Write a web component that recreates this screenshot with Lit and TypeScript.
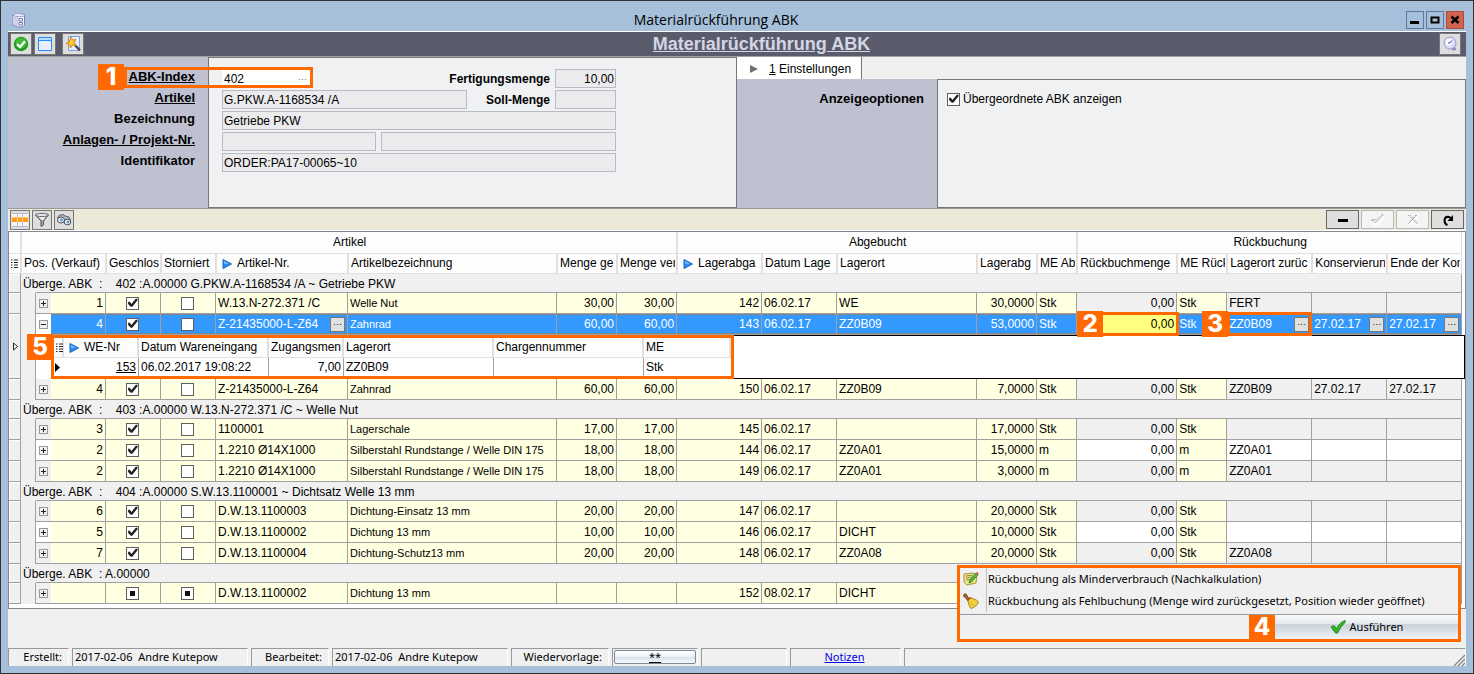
import { LitElement, html, css, svg, nothing } from "lit";
import { customElement, property } from "lit/decorators.js";
import { classMap } from "lit/directives/class-map.js";

interface Position {
  pos: string;
  state: "on" | "mixed";
  nr: string;
  name: string;
  total: string;
  used: string;
  issue: string;
  date: string;
  place: string;
  qty: string;
  unit: string;
  back: string;
  backPlace: string;
  keep: string;
  light?: boolean;
  selected?: boolean;
}

interface Group {
  title: string;
  rows: Position[];
}

const row = (v: string, extra: Partial<Position> = {}): Position => {
  const [pos, nr, name, total, used, issue, date, place, qty, unit, backPlace, keep] = v.split("|");
  return { pos, nr, name, total, used, issue, date, place, qty, unit, backPlace, keep, back: "0,00", state: "on", ...extra };
};

const GROUPS: Group[] = [
  {
    title: "Überge. ABK  :    402 :A.00000 G.PKW.A-1168534 /A ~ Getriebe PKW",
    rows: [
      row("1|W.13.N-272.371 /C|Welle Nut|30,00|30,00|142|06.02.17|WE|30,0000|Stk|FERT|"),
      row("4|Z-21435000-L-Z64|Zahnrad|60,00|60,00|143|06.02.17|ZZ0B09|53,0000|Stk|ZZ0B09|27.02.17", { selected: true, light: true }),
      row("4|Z-21435000-L-Z64|Zahnrad|60,00|60,00|150|06.02.17|ZZ0B09|7,0000|Stk|ZZ0B09|27.02.17"),
    ],
  },
  {
    title: "Überge. ABK  :    403 :A.00000 W.13.N-272.371 /C ~ Welle Nut",
    rows: [
      row("3|1100001|Lagerschale|17,00|17,00|145|06.02.17||17,0000|Stk||"),
      row("2|1.2210 Ø14X1000|Silberstahl Rundstange / Welle DIN 175|18,00|18,00|144|06.02.17|ZZ0A01|15,0000|m|ZZ0A01|", { light: true }),
      row("2|1.2210 Ø14X1000|Silberstahl Rundstange / Welle DIN 175|18,00|18,00|149|06.02.17|ZZ0A01|3,0000|m|ZZ0A01|"),
    ],
  },
  {
    title: "Überge. ABK  :    404 :A.00000 S.W.13.1100001 ~ Dichtsatz Welle 13 mm",
    rows: [
      row("6|D.W.13.1100003|Dichtung-Einsatz 13 mm|20,00|20,00|147|06.02.17||20,0000|Stk||"),
      row("5|D.W.13.1100002|Dichtung 13 mm|10,00|10,00|146|06.02.17|DICHT|10,0000|Stk||", { light: true }),
      row("7|D.W.13.1100004|Dichtung-Schutz13 mm|20,00|20,00|148|06.02.17|ZZ0A08|20,0000|Stk|ZZ0A08|"),
    ],
  },
  {
    title: "Überge. ABK  : A.00000",
    rows: [row("|D.W.13.1100002|Dichtung 13 mm|||152|08.02.17|DICHT||||", { state: "mixed", back: "" })],
  },
];

const COLUMNS = [12, 15, 15, 55, 55, 55, 132, 209, 60, 60, 85, 75, 140, 60, 40, 100, 50, 85, 75, 75];
const HEADERS: { text: string; sort?: boolean }[] = [
  { text: "Geschlos" },
  { text: "Storniert" },
  { text: "Artikel-Nr.", sort: true },
  { text: "Artikelbezeichnung" },
  { text: "Menge ge" },
  { text: "Menge ver" },
  { text: "Lagerabga", sort: true },
  { text: "Datum Lage" },
  { text: "Lagerort" },
  { text: "Lagerabg" },
  { text: "ME Ab" },
  { text: "Rückbuchmenge" },
  { text: "ME Rück" },
  { text: "Lagerort zurüc" },
  { text: "Konservierun" },
  { text: "Ende der Kon" },
];

const icon = (w: number, h: number, body: unknown) =>
  html`<svg width=${w} height=${h} viewBox="0 0 ${w} ${h}" aria-hidden="true">${body}</svg>`;

const icons = {
  app: icon(15, 16, svg`<path d="M1 3 5 1l8 1 1 2v9l-3 2.500H7L1 13z" fill="#7c7eb4"/><path d="M1.500 3.500l5 1.500v9.500l-5-2z" fill="#cfd0ec"/><path d="M6.500 5l6.500-.500v9L10.500 14.500h-4z" fill="#f4f5ff"/><path d="M2 3 5 1.500l7.500 1L13 4l-6.500.500z" fill="#e6e7f8"/><path d="M8 6.500h3.500v2.500H8zM8 10.500h3.500v2.500H8z" fill="#fff" stroke="#7779b4"/>`),
  min: icon(10, 10, svg`<path d="M0 6h9v3H0z"/>`),
  max: icon(10, 10, svg`<path d="M1.500 2.500h7v5h-7z" fill="none" stroke="#000" stroke-width="2"/>`),
  close: icon(10, 10, svg`<path d="M1.500 1.500l7 6.500M8.500 1.500l-7 6.500" stroke="#000" stroke-width="2.400"/>`),
  ok: icon(16, 16, svg`<circle cx="8" cy="8" r="7.200" fill="#1c9a1c"/><circle cx="8" cy="7" r="5.500" fill="#3dbb35"/><path d="M4 8.200 7 11l5-5.800" fill="none" stroke="#fff" stroke-width="2.400"/>`),
  window: icon(16, 16, svg`<path d="M1.500 1.500h13v13h-13z" fill="#eceeff" stroke="#1e90ff"/><path d="M1 4.500h14" stroke="#1e90ff"/><path d="M2 2h12v2H2z" fill="#b8dcff"/>`),
  wizard: icon(16, 16, svg`<path d="M3.500.500h11v14h-11z" fill="#e8efff" stroke="#7d9fe0"/><path d="M8 7l7 7.500" stroke="#4a4550" stroke-width="2.400"/><path d="M6 1l1.500 3 3.500-.500L9 6.500l2 3-3.500-.500L5.500 12l-1-3.500L1 7.500 4 6z" fill="#ffc83c" stroke="#d88a10"/>`),
  clock: icon(16, 16, svg`<circle cx="8" cy="7" r="6" fill="#dcdcf8" stroke="#9a9ad0"/><circle cx="7" cy="6" r="3.600" fill="#f8f8ff"/><path d="M8 7l2-2.500M8 7H6" stroke="#4848a0"/><path d="M11 11.500c1 .500 2 .200 2.500-.500l.5 3-4 .800z" fill="#8a8ac8"/>`),
  table: icon(16, 16, svg`<path d="M0 1h16v14H0z" fill="#f4f4fa"/><path d="M0 5h16v5H0z" fill="#ff9b1e"/><path d="M0 5h16v1H0z" fill="#ffbe50"/><path d="M5.500 1v14M10.500 1v14M0 1.500h16M0 14.500h16" stroke="#b9b9cc"/><path d="M5.500 5v5M10.500 5v5" stroke="#ffd890"/>`),
  filter: icon(16, 16, svg`<path d="M1.500 3 7 9v5.500l2.500-1.500V9l5-6z" fill="#a8abb2" stroke="#555"/><path d="M3.500 4h9L9 8H8z" fill="#f4f4f4"/><ellipse cx="8" cy="3" rx="6.500" ry="1.600" fill="#e8e8ea" stroke="#666"/>`),
  find: icon(16, 16, svg`<path d="M1.500 6 3 3.500l4-1L9 4l4 1 1.500 3-6 1z" fill="#b4bac4" stroke="#5c6270"/><ellipse cx="5" cy="8" rx="3.500" ry="3" fill="#eef2f6" stroke="#4a4f5c"/><ellipse cx="11.500" cy="10" rx="3.300" ry="2.800" fill="#eef2f6" stroke="#4a4f5c"/><circle cx="5.500" cy="8" r="1.400" fill="#5a93c4"/><circle cx="12" cy="10" r="1.400" fill="#5a93c4"/>`),
  minus: icon(12, 12, svg`<path d="M1 5h10v3H1z"/>`),
  check: icon(14, 12, svg`<path d="M2 8.500l3 2.500 8.500-8.500" fill="none" stroke="#fff" stroke-width="2"/><path d="M.500 6.500h2l2 2.500L12.500 1M1 6l3-1 1 1.500L10.500 1h2" fill="none" stroke="#a8a8a8" stroke-dasharray="2 1"/>`),
  cross: icon(14, 12, svg`<path d="M3 2l9 9M12 2l-9 9" stroke="#fff" stroke-width="2"/><path d="M2 1l9 9M11 1l-9 9M4 1l8 9M10 1 2 10" stroke="#a8a8a8" stroke-dasharray="2 1" fill="none"/>`),
  redo: icon(12, 12, svg`<path d="M5.500 11C1.500 9.500 1.500 3 5.800 2.800c1.800 0 2.400.700 3 1.700" fill="none" stroke="#000" stroke-width="2"/><path d="M11 1v6H5.500z"/>`),
  sort: icon(10, 10, svg`<path d="M1 .500 9.500 5 1 9.500z" fill="#2a8cf0" stroke="#1566c8"/><path d="M2 2l5 2.700H2z" fill="#7cc0ff"/>`),
  tabArrow: icon(8, 8, svg`<path d="M0 0l8 4-8 4z" fill="#707070"/>`),
  list: icon(8, 10, svg`<path d="M0 1h1.500M0 3.500h1.500M0 6h1.500M0 8.500h1.500M3 1h4M3 3.500h4M3 6h4M3 8.500h4" stroke="#222"/>`),
  current: icon(5, 9, svg`<path d="M.500 1v7l4-3.500z" fill="#fff" stroke="#222"/>`),
  currentSolid: icon(5, 9, svg`<path d="M0 0v9l5-4.500z"/>`),
  note: icon(16, 16, svg`<path d="M1 3l9-1 4 2-1 8-9 2-3-3z" fill="#f3e58a" stroke="#a89430"/><path d="M3 5l7-1M3 7l6-1M3 9l4-.500" stroke="#9a8a40"/><path d="M6 12l1-3 6-7 2 1.500-6 7z" fill="#52c043" stroke="#278a20"/><path d="M12.500 2.500 14 1l1.500 1.200L15 3.800z" fill="#e04838"/>`),
  broom: icon(16, 16, svg`<path d="M1 1.500C2 0 4 1 4 3l3 3-2 2-2.500-3.500C1 4 0 3 1 1.500z" fill="#a5682a" stroke="#70420f"/><path d="M5 7l2.500-2.500C10 6 13 6 15.500 9c-1 3-4 5.500-7.500 6.500C6 13 5 10 5 7z" fill="#f2d040" stroke="#a58410"/><path d="M7.500 9l3 4" stroke="#c8a828"/><path d="M4.500 7.500 8 4.500" stroke="#d03a20" stroke-width="1.400"/>`),
  go: icon(16, 14, svg`<path d="M1 7l3-1.500L6.500 9C8.500 5 11 2 15 .500l.5 1.500C12 5 9.500 9 7.500 13H5.500z" fill="#3cb52c" stroke="#1e8a18"/>`),
};

@customElement("step-badge")
export class StepBadge extends LitElement {
  @property() number = "";

  static styles = css`
    :host {
      display: block;
      width: 26px;
      height: 26px;
      background: #ff6900;
      color: #fff;
      font: 800 24px/26px Inter, "Liberation Sans", Arial, sans-serif;
      text-align: center;
    }
  `;

  render() {
    return html`${this.number}`;
  }
}

@customElement("app-root")
export class AppRoot extends LitElement {
  static styles = css`
    :host {
      display: flex;
      flex-direction: column;
      box-sizing: border-box;
      min-height: 100vh;
      padding: 0 7px 7px;
      border: 1px solid #333;
      background: #a6c0dc;
      color: #000;
      font: 12px/20px "Liberation Sans", Arial, sans-serif;
    }
    * {
      box-sizing: border-box;
    }
    svg {
      display: block;
      flex: none;
    }
    button,
    input {
      margin: 0;
      padding: 0;
      border-radius: 0;
      color: inherit;
      font: inherit;
    }
    button {
      display: flex;
      align-items: center;
      justify-content: center;
      border: 0;
      background: none;
    }
    .titlebar {
      display: flex;
      align-items: center;
      gap: 2px;
      height: 30px;
      padding: 7px 2px 0 3px;
    }
    .titlebar h1 {
      flex: 1;
      margin: 0;
      font: 14px/20px "Open Sans", "Noto Sans", sans-serif;
      text-align: center;
    }
    .winbtn {
      width: 18px;
      height: 18px;
      border: 1px solid #61789a;
    }
    .winbtn.close {
      border-color: #b04a3c;
      background: #cf6450;
    }
    .content {
      display: flex;
      flex: 1;
      flex-direction: column;
      border-top: 1px solid #fff;
      background: #f0f0f0;
    }
    .toolbar {
      display: flex;
      align-items: center;
      gap: 2px;
      height: 25px;
      padding: 0 5px 0 2px;
      border-bottom: 1px solid #a0a0a0;
      background: #5a5c6c;
    }
    .toolbar h2 {
      flex: 1;
      margin: 0;
      color: #d4d6e4;
      font-size: 18px;
      text-align: center;
      text-decoration: underline;
    }
    .tool {
      width: 22px;
      height: 22px;
      border: 1px solid #777;
      background: #dedede;
    }
    .tool.apart {
      margin-left: 4px;
    }
    .form {
      display: flex;
      min-height: 151px;
    }
    .half {
      position: relative;
      display: flex;
      flex: 1;
    }
    .labels {
      display: flex;
      flex: none;
      flex-direction: column;
      align-items: flex-end;
      gap: 2px;
      width: 200px;
      padding: 10px 13px 0 0;
      background: #bfc0d0;
      font-weight: bold;
      font-size: 13px;
      line-height: 19px;
    }
    .labels .link {
      text-decoration: underline;
    }
    .fields {
      display: flex;
      flex: 1;
      flex-direction: column;
      gap: 2px;
      padding: 11px 13px 0;
      border: 1px solid #777;
      background: #f0f1f3;
    }
    .line {
      display: flex;
      align-items: center;
      justify-content: space-between;
      gap: 5px;
      width: 394px;
      max-width: 100%;
      height: 19px;
    }
    .line label {
      flex: 1;
      font-weight: bold;
      text-align: right;
    }
    .field {
      flex: none;
      width: 61px;
      height: 19px;
      padding: 0 1px;
      border: 1px solid #b8bbc2;
      background: #ebebed;
    }
    .field.right {
      text-align: right;
    }
    .field.full {
      width: 100%;
    }
    .field.article {
      width: 245px;
    }
    .field.plant {
      width: 154px;
    }
    .field.project {
      flex: 1;
    }
    .index {
      display: flex;
      width: 88px;
      height: 19px;
      padding-right: 3px;
      background: #fff;
    }
    .index input {
      flex: 1;
      min-width: 0;
      padding: 0 2px;
      border: 0;
      background: none;
    }
    .index button {
      color: #666;
      font-size: 9px;
    }
    .frame {
      position: absolute;
      border: 3px solid #ff6900;
      pointer-events: none;
      z-index: 2;
    }
    .badge {
      position: absolute;
      z-index: 3;
    }
    .half > .frame {
      top: 10px;
      left: 116px;
      width: 189px;
      height: 21px;
    }
    .half > .badge {
      top: 7px;
      left: 90px;
    }
    .tabs {
      flex-direction: column;
    }
    .tab {
      align-self: flex-start;
      gap: 11px;
      height: 22px;
      padding: 2px 10px 0 13px;
      border-right: 1px solid #777;
      background: #fff;
    }
    .panel {
      display: flex;
      flex: 1;
    }
    .option {
      display: flex;
      align-items: center;
      gap: 3px;
      margin: -2px 0 0 -4px;
    }
    .check {
      display: block;
      flex: none;
      width: 13px;
      height: 13px;
      border: 1px solid #606060;
      background: #fff;
      appearance: none;
    }
    .check:checked::before {
      content: "";
      display: block;
      width: 11px;
      height: 11px;
      background: #222;
      clip-path: polygon(10% 38%, 26% 38%, 40% 58%, 80% 12%, 96% 12%, 96% 26%, 48% 84%, 34% 84%, 10% 58%);
    }
    .check:indeterminate::before {
      content: "";
      display: block;
      width: 5px;
      height: 5px;
      margin: 3px;
      background: #111;
    }
    .gridbar {
      display: flex;
      align-items: center;
      gap: 2px;
      height: 23px;
      padding: 0 2px;
      border-top: 1px solid #999;
      border-bottom: 1px solid #fff;
      background: #ece9d8;
    }
    .gridbar .tool {
      width: 20px;
      height: 20px;
    }
    .nav {
      width: 33px;
      height: 19px;
      border: 1px solid #666;
      background: #dedede;
    }
    .nav:disabled {
      border-color: #b8b8b8;
      background: #f4f4f4;
    }
    .push {
      margin-left: auto;
    }
    .work {
      position: relative;
      flex: 1;
      padding-bottom: 39px;
    }
    .grid {
      padding-bottom: 4px;
      border: 1px solid #85878f;
      background: #fff;
    }
    table {
      width: 100%;
      border-spacing: 0;
      table-layout: fixed;
    }
    th,
    td {
      padding: 0;
      white-space: nowrap;
    }
    th {
      height: 20px;
      padding: 0 1px 0 2px;
      border: 1px solid #e0e0e0;
      border-top: 0;
      background: #fdfdfd;
      font-weight: normal;
      line-height: 19px;
      text-align: left;
    }
    th.band {
      height: 22px;
      line-height: 21px;
      text-align: center;
    }
    th.stub {
      padding: 0 0 0 2px;
      border-left: 0;
    }
    th.rest {
      border: 0;
      background: #fff;
    }
    .head {
      display: flex;
      align-items: center;
      gap: 5px;
      overflow: hidden;
    }
    .head.sortable {
      padding-left: 3px;
    }
    td {
      position: relative;
      height: 21px;
      padding: 0 2px 0 1px;
      border: 0 solid #a0a0a0;
      border-width: 0 1px 1px 0;
      background: #ffffe1;
      line-height: 20px;
    }
    td.num {
      text-align: right;
    }
    td.small {
      font-size: 11px;
    }
    td.text {
      padding-left: 2px;
    }
    td.edit {
      background: #f0f0f0;
    }
    .light td.edit,
    .light td.tree {
      background: #fff;
    }
    td.gutter {
      padding: 0 0 0 4px;
      background: #f0f0f0;
      box-shadow: inset 1px 1px #fff;
    }
    td.indent {
      border-bottom: 0;
      background: #f0f0f0;
    }
    .last td.indent {
      border-bottom-width: 1px;
    }
    td.tree {
      padding: 0 0 0 3px;
      border-right: 0;
      background: #f0f0f0;
    }
    td.rest {
      border: 0;
      background: #fff;
    }
    td.title {
      height: 19px;
      padding-left: 2px;
      border-bottom: 0;
      background: linear-gradient(#a0a0a0, #a0a0a0) 15px 100% / 100% 1px no-repeat #f0f0f0;
      line-height: 18px;
      white-space: pre;
    }
    td.group-gutter {
      height: 19px;
    }
    .expand {
      width: 9px;
      height: 9px;
      border: 1px solid #999;
      background: #f0f0f0;
    }
    .centered {
      display: flex;
      justify-content: center;
    }
    .selected td.cell {
      background:
        repeating-linear-gradient(90deg, #c8701e 0 1px, #3399ff 1px 2px) 0 0 / 100% 1px no-repeat,
        repeating-linear-gradient(90deg, #c8701e 0 1px, #3399ff 1px 2px) 0 100% / 100% 1px no-repeat,
        #3399ff;
      color: #fff;
    }
    .selected td.target {
      background: #ffff80;
      color: #000;
    }
    .selected td.tree,
    .detail td.tree {
      border-bottom: 0;
    }
    .withbtn {
      display: flex;
      align-items: center;
      justify-content: space-between;
    }
    .lookup {
      width: 15px;
      height: 15px;
      border: 1px solid #777;
      background: #e0e0e0;
      color: #000;
      font-size: 9px;
      line-height: 9px;
    }
    .target .frame {
      inset: -2px -3px -2px 0;
    }
    .target .badge {
      top: -3px;
      left: 0;
    }
    .place .frame {
      inset: -2px -1px -2px 0;
    }
    .place .badge {
      top: -3px;
      left: -25px;
    }
    td.nest {
      height: 44px;
      padding: 0;
      border: 0;
      background: #fff;
      box-shadow: inset 0 0 0 1px #000;
    }
    .nest .badge {
      top: -1px;
      left: -24px;
    }
    .entries {
      width: 683px;
      height: 44px;
      border: 3px solid #ff6900;
      background: #fff;
    }
    .entries th {
      border-left: 0;
      border-right-width: 2px;
    }
    .entries td {
      height: 18px;
      border-bottom: 0;
      background: #fff;
      line-height: 18px;
    }
    .entries td:last-child,
    .entries td:first-child {
      border-right: 0;
    }
    .actions {
      position: absolute;
      right: 5px;
      bottom: 6px;
      width: 504px;
      border: 3px solid #ff6900;
      background: #f0f0f0;
      font-family: "Noto Sans", "Open Sans", sans-serif;
      font-size: 11px;
      z-index: 4;
    }
    .menu {
      padding-bottom: 2px;
      border-bottom: 1px solid #999;
    }
    .menu button {
      justify-content: flex-start;
      width: 100%;
      height: 22px;
      white-space: nowrap;
    }
    .menu .glyph {
      display: flex;
      align-items: center;
      width: 27px;
      height: 22px;
      margin-right: 1px;
      padding-left: 3px;
      border-right: 1px solid #c0c0c0;
    }
    .run {
      display: flex;
      justify-content: flex-end;
      height: 24px;
    }
    .run step-badge {
      height: 24px;
      line-height: 24px;
    }
    .run button {
      gap: 4px;
      width: 183px;
      background: linear-gradient(#fafbfc, #e6eaee 35%, #c9d2da 40%, #f0f4f8);
    }
    .status {
      display: flex;
      gap: 3px;
      height: 18px;
      font: 11px/16px "Noto Sans", "Open Sans", sans-serif;
    }
    .status > * {
      flex: none;
      padding: 0 4px 0 2px;
      border: 1px solid #999;
      border-right-color: #fff;
      border-bottom: 0;
      white-space: pre;
    }
    .status .right {
      text-align: right;
      padding-right: 6px;
    }
    .status .w1 {
      width: 61px;
    }
    .status .w2 {
      width: 176px;
    }
    .status .w3 {
      width: 78px;
    }
    .status .w4 {
      width: 98px;
    }
    .status .w5 {
      width: 86px;
      padding: 1px;
    }
    .status .w6 {
      width: 111px;
      text-align: center;
    }
    .status .fill {
      display: flex;
      flex: 1;
      align-items: flex-end;
      justify-content: flex-end;
      padding: 0;
      white-space: normal;
    }
    .status a {
      color: #0000ee;
    }
    .remind {
      width: 100%;
      height: 14px;
      border: 1px solid #7a8a9c;
      border-radius: 2px;
      background: linear-gradient(#fff, #f0f4f8 45%, #d8e0e8 50%, #f4f8fc);
      text-decoration: underline;
    }
  `;

  private box(state: string, label: string) {
    return html`<div class="centered">
      <input class="check" type="checkbox" aria-label=${label} .checked=${state === "on"} .indeterminate=${state === "mixed"} />
    </div>`;
  }

  private lookup(text: string, active?: boolean) {
    return active
      ? html`<div class="withbtn"><span>${text}</span><button class="lookup" aria-label="Auswahl">···</button></div>`
      : text;
  }

  private head(text: string, sort = false) {
    return html`<th>
      <div class=${classMap({ head: true, sortable: sort })}>${sort ? icons.sort : nothing}<span>${text}</span></div>
    </th>`;
  }

  private position(p: Position, last: boolean) {
    const s = p.selected;
    return html`<tr class=${classMap({ light: !!p.light, selected: !!s, last })}>
        <td class="gutter" rowspan=${s ? 2 : 1}>${s ? html`<div>${icons.current}</div>` : nothing}</td>
        <td class="indent"></td>
        <td class="tree">
          <button class="expand" aria-label=${s ? "Zuklappen" : "Aufklappen"}>
            ${icon(7, 7, svg`<path d=${s ? "M1 3.500h5" : "M1 3.500h5M3.500 1v5"} stroke="#222"/>`)}
          </button>
        </td>
        <td class="cell num">${p.pos}</td>
        <td class="cell">${this.box(p.state, "Geschlossen")}</td>
        <td class="cell">${this.box(p.state === "mixed" ? "mixed" : "off", "Storniert")}</td>
        <td class="cell text">${this.lookup(p.nr, s)}</td>
        <td class="cell text small">${p.name}</td>
        <td class="cell num">${p.total}</td>
        <td class="cell num">${p.used}</td>
        <td class="cell num">${p.issue}</td>
        <td class="cell text">${p.date}</td>
        <td class="cell text">${p.place}</td>
        <td class="cell num">${p.qty}</td>
        <td class="cell text">${p.unit}</td>
        <td class=${classMap({ cell: true, num: true, edit: true, target: !!s })}>${p.back}${s ? html`<div class="frame"></div><step-badge class="badge" number="2"></step-badge>` : nothing}</td>
        <td class="cell text">${p.unit}</td>
        <td class=${classMap({ cell: true, text: true, edit: true, place: !!s })}>${this.lookup(p.backPlace, s)}${s ? html`<div class="frame"></div><step-badge class="badge" number="3"></step-badge>` : nothing}</td>
        <td class="cell text edit">${this.lookup(p.keep, s)}</td>
        <td class="cell text edit">${this.lookup(p.keep, s)}</td>
        <td class="rest"></td>
      </tr>
      ${s ? this.detail() : nothing}`;
  }

  private detail() {
    return html`<tr class="detail light">
      <td class="indent"></td>
      <td class="tree"></td>
      <td class="nest" colspan="18">
        <step-badge class="badge" number="5"></step-badge>
        <div class="entries">
          <table>
            <colgroup>
              ${[10, 75, 130, 75, 150, 150].map((w) => html`<col style="width:${w}px" />`)}
              <col />
            </colgroup>
            <tr>
              <th class="stub">${icons.list}</th>
              ${this.head("WE-Nr", true)}
              ${["Datum Wareneingang", "Zugangsmen", "Lagerort", "Chargennummer", "ME"].map((t) => this.head(t))}
            </tr>
            <tr>
              <td>${icons.currentSolid}</td>
              <td class="num"><u>153</u></td>
              <td class="text">06.02.2017 19:08:22</td>
              <td class="num">7,00</td>
              <td class="text">ZZ0B09</td>
              <td></td>
              <td class="text">Stk</td>
            </tr>
          </table>
        </div>
      </td>
    </tr>`;
  }

  render() {
    return html`
      <header class="titlebar">
        ${icons.app}
        <h1>Materialrückführung ABK</h1>
        <button class="winbtn" aria-label="Minimieren">${icons.min}</button>
        <button class="winbtn" aria-label="Maximieren">${icons.max}</button>
        <button class="winbtn close" aria-label="Schließen">${icons.close}</button>
      </header>
      <main class="content">
        <div class="toolbar">
          <button class="tool" aria-label="Übernehmen">${icons.ok}</button>
          <button class="tool" aria-label="Fenster">${icons.window}</button>
          <button class="tool apart" aria-label="Assistent">${icons.wizard}</button>
          <h2>Materialrückführung ABK</h2>
          <button class="tool" aria-label="Verlauf">${icons.clock}</button>
        </div>
        <section class="form">
          <div class="half">
            <div class="labels">
              <label class="link" for="index">ABK-Index</label>
              <label class="link" for="article">Artikel</label>
              <label for="name">Bezeichnung</label>
              <label class="link" for="plant">Anlagen- / Projekt-Nr.</label>
              <label for="ident">Identifikator</label>
            </div>
            <div class="fields">
              <div class="line">
                <div class="index">
                  <input id="index" value="402" />
                  <button aria-label="ABK auswählen">···</button>
                </div>
                <label for="made">Fertigungsmenge</label>
                <input class="field right" id="made" readonly value="10,00" />
              </div>
              <div class="line">
                <input class="field article" id="article" readonly value="G.PKW.A-1168534 /A" />
                <label for="target">Soll-Menge</label>
                <input class="field right" id="target" readonly />
              </div>
              <div class="line"><input class="field full" id="name" readonly value="Getriebe PKW" /></div>
              <div class="line">
                <input class="field plant" id="plant" readonly />
                <input class="field project" aria-label="Projekt-Nr." readonly />
              </div>
              <div class="line"><input class="field full" id="ident" readonly value="ORDER:PA17-00065~10" /></div>
            </div>
            <div class="frame"></div>
            <step-badge class="badge" number="1"></step-badge>
          </div>
          <div class="half tabs">
            <button class="tab" role="tab" aria-selected="true">${icons.tabArrow}<span><u>1</u> Einstellungen</span></button>
            <div class="panel">
              <div class="labels"><span>Anzeigeoptionen</span></div>
              <div class="fields">
                <label class="option"><input class="check" type="checkbox" checked />Übergeordnete ABK anzeigen</label>
              </div>
            </div>
          </div>
        </section>
        <div class="gridbar">
          <button class="tool" aria-label="Ansicht">${icons.table}</button>
          <button class="tool" aria-label="Filter">${icons.filter}</button>
          <button class="tool" aria-label="Suchen">${icons.find}</button>
          <button class="nav push" aria-label="Entfernen">${icons.minus}</button>
          <button class="nav" disabled aria-label="Speichern">${icons.check}</button>
          <button class="nav" disabled aria-label="Verwerfen">${icons.cross}</button>
          <button class="nav" aria-label="Aktualisieren">${icons.redo}</button>
        </div>
        <div class="work">
          <div class="grid">
            <table>
              <colgroup>
                ${COLUMNS.map((w) => html`<col style="width:${w}px" />`)}
                <col />
              </colgroup>
              <thead>
                <tr>
                  <th class="band stub"></th>
                  <th class="band" colspan="9">Artikel</th>
                  <th class="band" colspan="5">Abgebucht</th>
                  <th class="band" colspan="5">Rückbuchung</th>
                  <th class="rest"></th>
                </tr>
                <tr>
                  <th class="stub">${icons.list}</th>
                  <th colspan="3">Pos. (Verkauf)</th>
                  ${HEADERS.map((h) => this.head(h.text, h.sort))}
                  <th class="rest"></th>
                </tr>
              </thead>
              <tbody>
                ${GROUPS.map(
                  (g) => html`<tr>
                      <td class="gutter group-gutter"></td>
                      <td class="title" colspan="19">${g.title}</td>
                      <td class="rest group-gutter"></td>
                    </tr>
                    ${g.rows.map((p, i) => this.position(p, i === g.rows.length - 1))}`
                )}
              </tbody>
            </table>
          </div>
          <div class="actions">
            <div class="menu">
              <button><span class="glyph">${icons.note}</span>Rückbuchung als Minderverbrauch (Nachkalkulation)</button>
              <button><span class="glyph">${icons.broom}</span>Rückbuchung als Fehlbuchung (Menge wird zurückgesetzt, Position wieder geöffnet)</button>
            </div>
            <div class="run">
              <step-badge number="4"></step-badge>
              <button>${icons.go}Ausführen</button>
            </div>
          </div>
        </div>
        <footer class="status">
          <div class="w1 right">Erstellt:</div>
          <div class="w2">2017-02-06  Andre Kutepow</div>
          <div class="w3 right">Bearbeitet:</div>
          <div class="w2">2017-02-06  Andre Kutepow</div>
          <div class="w4 right">Wiedervorlage:</div>
          <div class="w5"><button class="remind">**</button></div>
          <div class="w5"></div>
          <div class="w6"><a href="#notizen">Notizen</a></div>
          <div class="fill">
            ${icon(12, 12, svg`<path d="M1 12 12 1M5 12l7-7M9 12l3-3" stroke="#888" stroke-width="1.400"/>`)}
          </div>
        </footer>
      </main>
    `;
  }
}
